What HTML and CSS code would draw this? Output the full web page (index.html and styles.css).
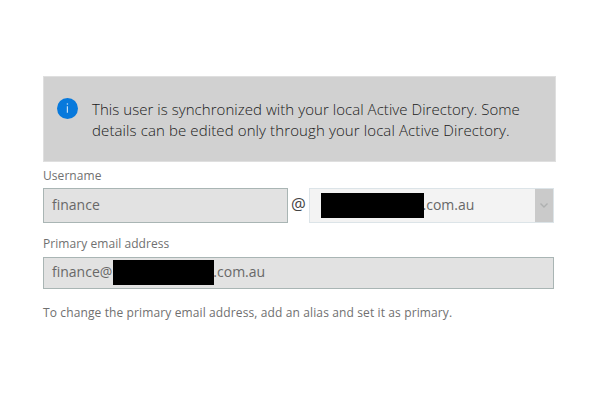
FILE: index.html
```html
<!DOCTYPE html>
<html lang="en">
<head>
<meta charset="utf-8">
<title>Username and email</title>
<link rel="stylesheet" href="styles.css">
</head>
<body>
<main class="panel">
  <section class="notice">
    <svg class="notice-icon" viewBox="0 0 21 21"><circle cx="10.5" cy="10.5" r="10.5" fill="#0779dc"/><path d="M10.4 8.2v6.6" stroke="#c4def5" stroke-width="1.2"/><circle cx="10.4" cy="6" r=".8" fill="#c4def5"/></svg>
    <p class="notice-text"><span class="line1">This user is synchronized with your local Active Directory. Some</span><br><span class="line2">details can be edited only through your local Active Directory.</span></p>
  </section>
  <div class="label username-label"><span>Username</span></div>
  <div class="row">
    <div class="field username"><span class="value">finance</span></div>
    <span class="at">@</span>
    <div class="field domain"><span class="redacted"></span><span class="value">.com.au</span>
      <span class="arrow"><svg viewBox="0 0 18 32"><path d="M5.5 14.5l3.5 3.5 3.5-3.5" fill="none" stroke="#aeb0b0" stroke-width="1.4"/></svg></span>
    </div>
  </div>
  <div class="label email-label"><span>Primary email address</span></div>
  <div class="field email"><span class="value">finance@</span><span class="redacted"></span><span class="value">.com.au</span></div>
  <p class="hint"><span>To change the primary email address, add an alias and set it as primary.</span></p>
</main>
</body>
</html>
```
FILE: styles.css
```css
* { box-sizing: border-box; }
body { margin: 0; background: #fff; font-family: "Open Sans", "Noto Sans", sans-serif; }
p { margin: 0; }
.panel { width: 513px; margin: 76px 0 0 43px; }
.notice { display: flex; height: 86px; padding: 20px 0 0 13px; background: #d1d1d1; border: 1px solid #dfdfdf; }
.notice-icon { width: 21px; height: 21px; margin-top: 1px; flex: none; }
.notice-text { margin: 2px 0 0 14px; font-size: 15px; font-weight: 300; line-height: 21px; color: #202020; white-space: nowrap; }
.line1 { letter-spacing: 0.05px; }
.line2 { letter-spacing: 0.11px; }
.label { height: 26px; padding-top: 4px; font-size: 12px; line-height: 20px; letter-spacing: 0.06px; color: #707070; white-space: nowrap; }
.row { display: flex; width: 511px; height: 35px; }
.field { display: flex; align-items: center; border: 1px solid #a9b5b4; background: #e2e2e2; color: #686868; font-size: 14px; white-space: nowrap; }
.value { position: relative; top: -1px; }
.username { width: 245px; padding-left: 8px; }
.at { width: 21px; padding-left: 3px; font-size: 16.5px; line-height: 31px; color: #444; }
.domain { width: 245px; padding-left: 10.5px; background: #f3f3f3; border-color: #dce4e8; }
.redacted { width: 103px; height: 25px; background: #000; flex: none; }
.domain .value { margin-left: -1px; }
.domain .redacted { position: relative; z-index: 1; }
.arrow { display: flex; width: 18px; height: 33px; margin-left: auto; background: #cacaca; }
.arrow svg { width: 18px; height: 32px; }
.email-label { padding-top: 11px; height: 34px; }
.email { width: 511px; height: 32px; padding: 0 0 2px 8px; }
.email .redacted { width: 101px; margin-left: 1px; }
.email .redacted + .value { margin-left: -1px; }
.hint { margin-top: 14px; font-size: 12px; line-height: 20px; letter-spacing: 0.12px; color: #707070; white-space: nowrap; }
```
